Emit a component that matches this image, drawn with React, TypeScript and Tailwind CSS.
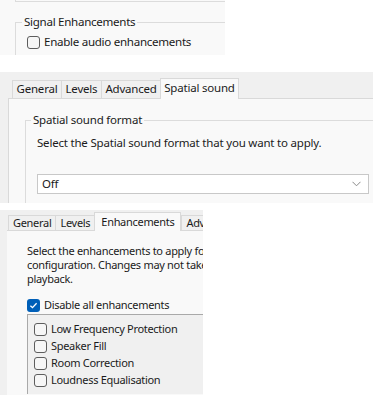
import React from "react";

const ui = "font-['Noto_Sans',sans-serif] text-[#1b1b1b]";

function Box({ checked = false }: { checked?: boolean }) {
  if (checked) {
    return (
      <span className="flex h-[13px] w-[13px] shrink-0 items-center justify-center rounded-[3px] bg-[#005fb8]">
        <svg width="9" height="9" viewBox="0 0 9 9">
          <path d="M1.4 4.7 L3.5 6.7 L7.6 2.3" stroke="#fff" strokeWidth="1.3" fill="none" />
        </svg>
      </span>
    );
  }
  return <span className="h-[13px] w-[13px] shrink-0 rounded-[3px] border border-[#5d5d5d] bg-[#f6f6f6]" />;
}

function Tab({ label, active = false, cls }: { label: string; active?: boolean; cls: string }) {
  return active ? (
    <div className={`-mb-px ${cls} border-x border-t border-[#d9d9d9] bg-[#f9f9f9] leading-[18px]`}>{label}</div>
  ) : (
    <div className={`${cls} border-l border-t border-[#d9d9d9] bg-[#f0f0f0] last:border-r`}>{label}</div>
  );
}

export default function App() {
  const items = ["Low Frequency Protection", "Speaker Fill", "Room Correction", "Loudness Equalisation"];
  const t2 = "h-[18px] px-[3.5px] leading-[16px]";
  const t3 = "h-[15px] px-[4px] leading-[14px]";

  return (
    <div className={`h-[413px] w-[385px] overflow-hidden bg-white ${ui}`}>
      {/* Signal enhancements */}
      <div className="h-[55px] w-[225px] overflow-hidden bg-[#f9f9f9] text-[11.6px] tracking-[-0.3px]">
        <div className="ml-[15px] h-[2px] border-b border-l border-[#dcdcdc]" />
        <fieldset className="ml-[15px] mt-[12px] h-[60px] border-l border-t border-[#dcdcdc] pl-[11px] pt-[4px]">
          <legend className="-ml-[5px] px-[2px] leading-[16px]">Signal Enhancements</legend>
          <label className="flex items-center gap-[4px] leading-[16px]">
            <Box />
            Enable audio enhancements
          </label>
        </fieldset>
      </div>

      {/* Spatial sound */}
      <div className="mt-[17px] h-[131px] w-[373px] overflow-hidden bg-[#f0f0f0] text-[11.5px] tracking-[-0.2px]">
        <div className="flex h-[26px] items-end pl-[12px]">
          <Tab label="General" cls={t2} />
          <Tab label="Levels" cls={t2} />
          <Tab label="Advanced" cls={t2} />
          <Tab label="Spatial sound" active cls="h-[21px] px-[3px]" />
        </div>
        <div className="ml-[8px] h-[120px] border-l border-t border-[#d9d9d9] bg-[#f9f9f9] pt-[13px]">
          <fieldset className="ml-[16px] h-[120px] border-l border-t border-[#dcdcdc] pl-[11px] pt-[7px]">
            <legend className="-ml-[6px] px-[2px] leading-[16px]">Spatial sound format</legend>
            <p className="leading-[16px]">Select the Spatial sound format that you want to apply.</p>
            <div className="mt-[23px] flex h-[20px] w-[332px] items-center justify-between border border-[#c8c8c8] bg-white pl-[4px] pr-[7px]">
              <span>Off</span>
              <svg width="9" height="6" viewBox="0 0 9 6">
                <path d="M0.5 0.8 L4.5 4.8 L8.5 0.8" stroke="#8a8a8a" strokeWidth="1" fill="none" />
              </svg>
            </div>
          </fieldset>
        </div>
      </div>

      {/* Enhancements */}
      <div className="mt-[7px] h-[185px] w-[203px] overflow-hidden bg-[#f0f0f0] text-[11px] tracking-[-0.3px]">
        <div className="flex h-[20px] items-end whitespace-nowrap pl-[8px]">
          <Tab label="General" cls={t3} />
          <Tab label="Levels" cls={t3} />
          <Tab label="Enhancements" active cls="h-[19px] px-[6px]" />
          <Tab label="Advanced" cls={t3} />
        </div>
        <div className="ml-[7px] h-[165px] border-t border-[#d9d9d9] bg-[#f9f9f9] pl-[20px] pt-[13px]">
          <p className="whitespace-nowrap leading-[14px]">
            Select the enhancements to apply for your current speaker
            <br />
            configuration. Changes may not take effect until the next time you start
            <br />
            playback.
          </p>
          <label className="mt-[12px] flex items-center gap-[4px] leading-[14px]">
            <Box checked />
            Disable all enhancements
          </label>
          <div className="mt-[2px] h-[80px] w-[200px] border-l border-t border-[#a9a9a9] bg-[#f0f0f0] pl-[6px] pt-[6px]">
            {items.map((t) => (
              <label key={t} className="flex h-[17px] items-center gap-[4px]">
                <Box />
                {t}
              </label>
            ))}
          </div>
        </div>
      </div>
    </div>
  );
}
